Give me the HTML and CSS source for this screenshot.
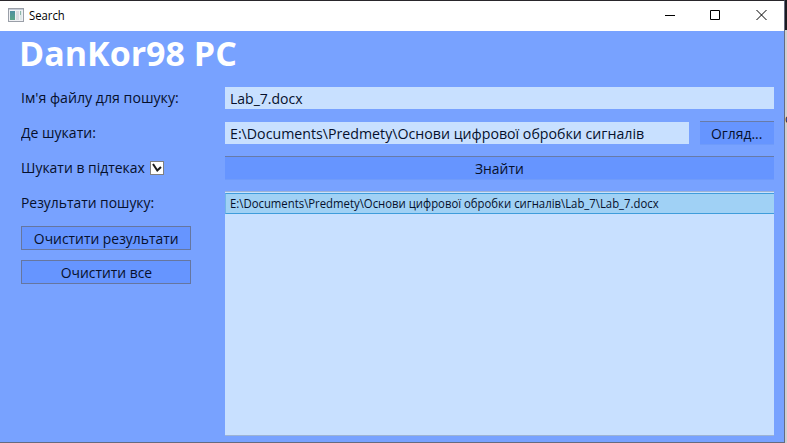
FILE: index.html
```html
<!DOCTYPE html>
<html lang="uk">
<head>
<meta charset="utf-8">
<title>Search</title>
<link rel="stylesheet" href="styles.css">
</head>
<body>
<div class="desktop">
  <main class="window">
    <header class="titlebar">
      <svg class="app-icon" width="16" height="14" viewBox="0 0 16 14">
        <defs><linearGradient id="pane" x1="0" y1="0" x2="0" y2="1"><stop offset="0" stop-color="#4d8fa0"/><stop offset="1" stop-color="#5aa486"/></linearGradient></defs>
        <rect x=".5" y=".5" width="15" height="13" fill="#f0f1f4" stroke="#9a9fa8"/>
        <path d="M1 1.5h14" stroke="#c3cad6"/>
        <rect x="2" y="3" width="5" height="9" fill="url(#pane)"/>
        <rect x="8" y="3" width="3" height="9" fill="#d9dce0"/>
        <rect x="12" y="3" width="2" height="9" fill="#dfe9e8"/>
        <path d="M12.5 3v4" stroke="#8cb7a8"/>
      </svg>
      <span class="caption">Search</span>
      <svg class="controls" width="102" height="10" viewBox="0 0 102 10" fill="none" stroke="#000">
        <path d="M0 5.500h10M45.500.500h9v9h-9zM91.500 0l10 10M101.500 0l-10 10"/>
      </svg>
    </header>
    <section class="content">
      <h1>DanKor98 PC</h1>
      <div class="form">
        <div class="side">
          <div class="label"><span class="t-name">Ім'я файлу для пошуку:</span></div>
          <div class="label"><span class="t-where">Де шукати:</span></div>
          <div class="label"><span class="t-sub">Шукати в підтеках</span>
            <svg class="check" width="14" height="14" viewBox="0 0 14 14"><rect x=".5" y=".5" width="13" height="13" fill="#fff" stroke="#808080"/><path d="M3 3l4.300 6.500L11 6" fill="none" stroke="#1c1c1c" stroke-width="2"/></svg>
          </div>
          <div class="label"><span class="t-results">Результати пошуку:</span></div>
          <div class="button outlined"><span class="t-clear">Очистити результати</span></div>
          <div class="button outlined"><span class="t-all">Очистити все</span></div>
        </div>
        <div class="main">
          <div class="field"><span class="t-file">Lab_7.docx</span></div>
          <div class="path-row">
            <div class="field"><span class="t-path">E:\Documents\Predmety\Основи цифрової обробки сигналів</span></div>
            <div class="button browse"><span class="t-browse">Огляд...</span></div>
          </div>
          <div class="button find"><span class="t-find">Знайти</span></div>
          <div class="list">
            <div class="item"><span class="t-item">E:\Documents\Predmety\Основи цифрової обробки сигналів\Lab_7\Lab_7.docx</span></div>
          </div>
        </div>
      </div>
    </section>
  </main>
  <aside class="behind"><span>c</span></aside>
</div>
</body>
</html>
```
FILE: styles.css
```css
* { box-sizing: border-box; }
body { margin: 0; overflow: hidden; font: 15px/22px "Open Sans", "Noto Sans", sans-serif; color: #06102c; }
span { white-space: nowrap; transform-origin: left center; }
.desktop { display: flex; width: 787px; height: 443px; background: #d0d0d0; }
.window { width: 785px; height: 443px; display: flex; flex-direction: column; border: solid #656b80; border-width: 0 1px 1px 0; border-top: 1px solid #29262b; background: #78a2ff; }
.titlebar { height: 30px; background: #fff; display: flex; align-items: center; padding: 0 17px 1px 8px; color: #000; }
.app-icon { margin-top: -1px; }
.caption { margin-left: 5px; font-size: 12px; transform: scaleX(.94); }
.controls { margin-left: auto; margin-top: -1px; }
.content { flex: 1; display: flex; flex-direction: column; padding: 0 10px 6px 21px; }
h1 { margin: 0 0 0 -2px; height: 56px; font-size: 34px; line-height: 44px; color: #fff; }
.form { flex: 1; display: flex; }
.side { width: 170px; margin-right: 34px; }
.label { height: 22px; margin-bottom: 13px; display: flex; align-items: center; }
.check { margin-left: -4px; }
.label span { position: relative; top: -1px; }
.t-name { transform: scaleX(.944); }
.t-where { transform: scaleX(.935); }
.t-sub { transform: scaleX(.93); }
.t-results { transform: scaleX(.925); }
.t-file { transform: scaleX(.935); }
.t-path { transform: scaleX(.946); }
.t-item { transform: scaleX(.945); }
.button { display: flex; align-items: center; justify-content: center; height: 24px; background: #6695ff; border-top: 1px solid #687ba8; border-bottom: 1px solid #6f9bfa; }
.button span { transform-origin: center; }
.t-clear, .t-all, .t-browse, .t-find { transform: scaleX(.925); }
.outlined { border: 1px solid #66769f; margin-bottom: 10px; }
.outlined:nth-child(5) { margin-top: -1px; }
.main { flex: 1; min-width: 0; display: flex; flex-direction: column; }
.field { height: 22px; flex: none; background: #c8e0ff; padding-left: 5px; display: flex; align-items: center; }
.path-row { display: flex; align-items: center; height: 24px; margin-top: 12px; }
.path-row .field { flex: 1; }
.browse { width: 74px; margin-left: 11px; }
.find { margin-top: 11px; }
.list { flex: 1; margin-top: 11px; background: #c8e0ff; border-top: 1px solid #9db3d4; border-bottom: 1px solid #9db3d4; padding-top: 1px; }
.item { height: 21px; background: #a0d1f5; border: 1px solid #3f9ddb; border-right: 0; border-left-color: #73b7e6; display: flex; align-items: center; padding-left: 4px; font-size: 12px; }
.behind { width: 2px; border-top: 30px solid #1b1b20; overflow: hidden; font-size: 12px; line-height: 14px; padding-top: 82px; }
```
